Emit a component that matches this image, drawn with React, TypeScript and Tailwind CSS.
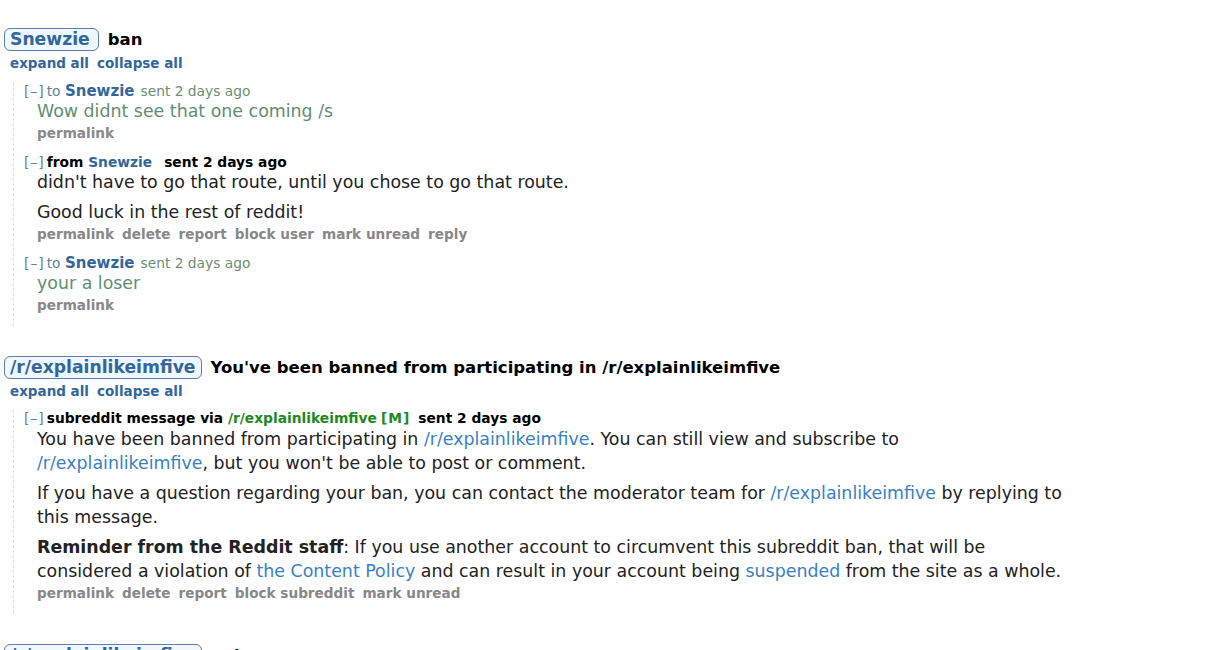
import React from "react";

const FONT = { fontFamily: '"DejaVu Sans", Verdana, sans-serif' };

function Badge({ children, wide }: { children: React.ReactNode; wide?: boolean }) {
  return (
    <span
      className={
        wide
          ? "inline-block h-[23px] rounded-[6px] border border-[#5f7fa8] bg-[#eff7ff] pr-[8px] pl-[5px] text-[17.2px] leading-[21px] font-bold text-[#336699]"
          : "inline-block h-[23px] rounded-[6px] border border-[#5f7fa8] bg-[#eff7ff] px-[5px] text-[17.2px] leading-[21px] font-bold text-[#336699]"
      }
    >
      {children}
    </span>
  );
}

function Header({ badge, title, wide }: { badge: string; title: string; wide?: boolean }) {
  return (
    <div>
      <div className="flex h-[23px] items-center gap-[9px] pl-[4px]">
        <Badge wide={wide}>{badge}</Badge>
        <span className="pt-[1px] text-[16.5px] font-bold text-black">{title}</span>
      </div>
      <div className="mt-[2px] flex gap-[8px] pl-[10px] text-[13.5px] leading-[20px] font-bold text-[#336699]">
        <span>expand all</span>
        <span>collapse all</span>
      </div>
    </div>
  );
}

function Actions({ items }: { items: string[] }) {
  return (
    <div className="flex gap-[8px] pl-[13px] text-[13.6px] leading-[20px] font-bold text-[#888]">
      {items.map((i) => (
        <span key={i}>{i}</span>
      ))}
    </div>
  );
}

function Toggle() {
  return <span className="mr-[2px] font-normal tracking-[1px] text-[#5f7f9f]">[–]</span>;
}

function SentMsg({ body }: { body: string }) {
  return (
    <div className="pb-[11px]">
      <div className="text-[13.8px] leading-[16px]">
        <Toggle />
        <span className="text-[#5f7f9f]">to </span>
        <span className="text-[15px] font-bold text-[#336699]">Snewzie</span>
        <span className="ml-[6px] text-[#6b8f73]">sent 2 days ago</span>
      </div>
      <div className="pl-[13px] text-[17.4px] leading-[24px] text-[#5f8f73]">{body}</div>
      <Actions items={["permalink"]} />
    </div>
  );
}

const A = ({ children }: { children: React.ReactNode }) => (
  <span className="text-[#3a7fc4]">{children}</span>
);

export default function App() {
  return (
    <div className="h-[650px] overflow-hidden bg-white pt-[28px]" style={FONT}>
      <Header badge="Snewzie" title="ban" wide />
      <div className="mt-[10px] ml-[13px] border-l border-dashed border-[#ddd] pl-[10px]">
        <SentMsg body="Wow didnt see that one coming /s" />
        <div className="pb-[11px]">
          <div className="text-[13.8px] leading-[16px] font-bold">
            <Toggle />
            <span className="text-black">from </span>
            <span className="text-[#336699]">Snewzie</span>
            <span className="ml-[12px] text-black">sent 2 days ago</span>
          </div>
          <div className="pl-[13px] text-[17.4px] leading-[24px] text-[#222]">
            <p>didn't have to go that route, until you chose to go that route.</p>
            <p className="mt-[6px]">Good luck in the rest of reddit!</p>
          </div>
          <Actions items={["permalink", "delete", "report", "block user", "mark unread", "reply"]} />
        </div>
        <SentMsg body="your a loser" />
      </div>

      <div className="mt-[30px]">
        <Header badge="/r/explainlikeimfive" title="You've been banned from participating in /r/explainlikeimfive" />
      </div>
      <div className="mt-[9px] ml-[13px] border-l border-dashed border-[#ddd] pl-[10px] pb-[10px]">
        <div className="text-[13.8px] leading-[16px] font-bold">
          <Toggle />
          <span className="text-black">subreddit message via </span>
          <span className="text-[#228822]">/r/explainlikeimfive</span>
          <span className="ml-[4px] tracking-[1px] text-[#228822]">[M]</span>
          <span className="ml-[8px] text-black">sent 2 days ago</span>
        </div>
        <div className="mt-[1px] w-[1045px] pl-[13px] text-[17.4px] leading-[24px] text-[#222]">
          <p>
            You have been banned from participating in <A>/r/explainlikeimfive</A>. You can still view and subscribe to{" "}
            <A>/r/explainlikeimfive</A>, but you won't be able to post or comment.
          </p>
          <p className="mt-[6px]">
            If you have a question regarding your ban, you can contact the moderator team for <A>/r/explainlikeimfive</A> by replying to
            this message.
          </p>
          <p className="mt-[6px]">
            <b>Reminder from the Reddit staff</b>: If you use another account to circumvent this subreddit ban, that will be
            considered a violation of <A>the Content Policy</A> and can result in your account being <A>suspended</A> from the site as
            a whole.
          </p>
        </div>
        <Actions items={["permalink", "delete", "report", "block subreddit", "mark unread"]} />
      </div>

      <div className="mt-[31px]">
        <Header badge="/r/explainlikeimfive" title="unban" />
      </div>
    </div>
  );
}
